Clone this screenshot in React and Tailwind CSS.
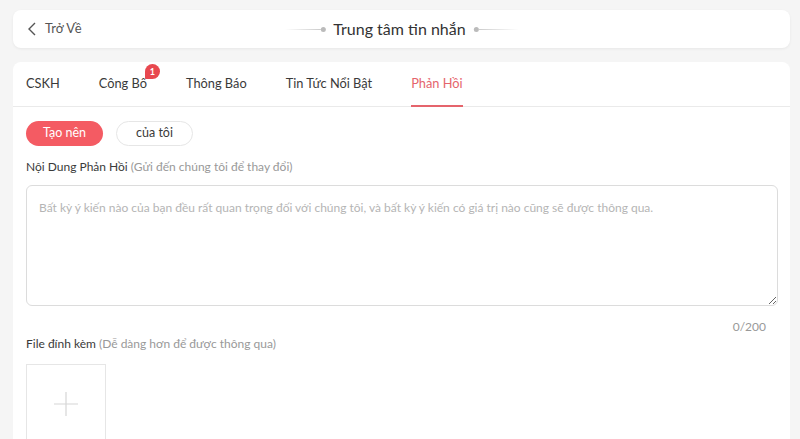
import React from "react";

export default function App() {
  const tabs = ["CSKH", "Công Bố", "Thông Báo", "Tin Tức Nổi Bật", "Phản Hồi"];
  return (
    <div className="h-screen w-full overflow-hidden bg-[#f5f5f5] pl-[13px] pr-[10px] pt-[10px] text-[#333]" style={{ fontFamily: 'Lato, "Noto Sans", sans-serif' }}>
      {/* header */}
      <div className="relative flex h-[38px] items-center rounded-lg bg-white shadow-[0_1px_3px_rgba(0,0,0,0.06)]">
        <div className="flex items-center pl-[14px] text-[13px] text-[#555]">
          <svg width="10" height="14" viewBox="0 0 10 14" className="mr-[8px]">
            <path d="M8 1 L2 7 L8 13" fill="none" stroke="#555" strokeWidth="1.4" />
          </svg>
          <span>Trở Về</span>
        </div>
        <div className="absolute left-1/2 top-1/2 flex -translate-x-1/2 -translate-y-1/2 items-center gap-[8px]">
          <div className="flex items-center">
            <div className="h-px w-[36px] bg-gradient-to-r from-transparent to-[#ccc]" />
            <div className="h-[5px] w-[5px] rounded-full bg-[#bbb]" />
          </div>
          <span className="text-[16px] text-[#333]">Trung tâm tin nhắn</span>
          <div className="flex items-center">
            <div className="h-[5px] w-[5px] rounded-full bg-[#bbb]" />
            <div className="h-px w-[40px] bg-gradient-to-r from-[#ccc] to-transparent" />
          </div>
        </div>
      </div>

      {/* content card */}
      <div className="mt-[14px] rounded-t-lg bg-white pb-[40px]">
        <div className="flex h-[45px] items-stretch gap-[39px] border-b border-[#eaeaea] pl-[13px]">
          {tabs.map((t, i) => (
            <div key={t} className={"relative flex items-center text-[12.8px] " + (i === 4 ? "text-[#e5646c]" : "text-[#3a3a3a]")}>
              <span>{t}</span>
              {i === 1 && (
                <span className="absolute left-[calc(100%-2px)] top-[2px] flex h-[15px] w-[15px] items-center justify-center rounded-[8px_8px_8px_1px] bg-[#e8484f] text-[9px] font-bold leading-none text-white">
                  1
                </span>
              )}
              {i === 4 && <span className="absolute bottom-[-1px] left-0 right-0 h-[2px] bg-[#e5646c]" />}
            </div>
          ))}
        </div>

        <div className="pl-[13px] pr-[12px]">
          <div className="mt-[14px] flex gap-[13px]">
            <button className="flex h-[25px] w-[77px] items-center justify-center rounded-full bg-[#f45b63] text-[12.5px] text-white">
              Tạo nên
            </button>
            <button className="flex h-[25px] w-[77px] items-center justify-center rounded-full border border-[#e6e6e6] bg-white text-[12.5px] text-[#3a3a3a]">
              của tôi
            </button>
          </div>

          <div className="mt-[13px] text-[12px] leading-[16px]">
            <span className="text-[#3a3a3a]">Nội Dung Phản Hồi</span>{" "}
            <span className="text-[#999]">(Gửi đến chúng tôi để thay đổi)</span>
          </div>

          <div className="mt-[10px] rounded-md border border-[#dcdcdc]">
            <textarea
              className="block h-[119px] w-full resize-y rounded-md px-[12px] py-[13px] text-[12px] leading-[18px] text-[#333] outline-none placeholder:text-[#b5b5b5]"
              placeholder="Bất kỳ ý kiến nào của bạn đều rất quan trọng đối với chúng tôi, và bất kỳ ý kiến có giá trị nào cũng sẽ được thông qua."
            />
          </div>

          <div className="mt-[13px] pr-[12px] text-right text-[12px] leading-[16px] text-[#999]">0/200</div>

          <div className="mt-[1px] text-[12px] leading-[16px]">
            <span className="text-[#3a3a3a]">File đính kèm</span>{" "}
            <span className="text-[#999]">(Dễ dàng hơn để được thông qua)</span>
          </div>

          <div className="mt-[12px] flex h-[80px] w-[80px] items-center justify-center border border-[#e6e6e6]">
            <svg width="26" height="26" viewBox="0 0 26 26">
              <path d="M13 1 V25 M1 13 H25" stroke="#d6d6d6" strokeWidth="1.2" />
            </svg>
          </div>
        </div>
      </div>
    </div>
  );
}
